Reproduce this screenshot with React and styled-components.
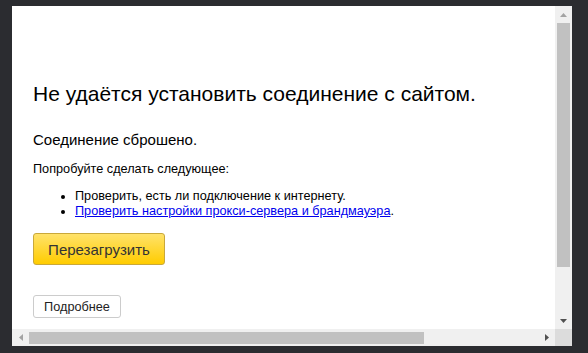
import React from "react";
import styled, { createGlobalStyle } from "styled-components";

const Global = createGlobalStyle`
  html, body { margin: 0; padding: 0; background: #2b2c30; }
  body { width: 588px; height: 353px; overflow: hidden; font-family: "Liberation Sans", Arial, sans-serif; }
`;

const Frame = styled.div`
  padding: 6px 16px 7px 12px;
  height: 353px;
  box-sizing: border-box;
`;

const Window = styled.div`
  width: 560px;
  height: 340px;
  background: #fff;
  display: grid;
  grid-template-columns: 1fr 17px;
  grid-template-rows: 1fr 17px;
`;

const Viewport = styled.div`
  overflow: hidden;
  padding: 76px 0 0 21px;
  color: #000;
`;

const Title = styled.h1`
  margin: 0;
  font-size: 21px;
  font-weight: normal;
  line-height: 24px;
`;

const Sub = styled.p`
  margin: 25px 0 0;
  font-size: 15px;
  line-height: 18px;
`;

const Hint = styled.p`
  margin: 13px 0 0;
  font-size: 12.7px;
  line-height: 15px;
`;

const List = styled.ul`
  margin: 12px 0 0;
  padding-left: 42px;
  font-size: 12.7px;
  line-height: 15px;
`;

const Link = styled.a`
  color: #0000ee;
  text-decoration: underline;
`;

const Reload = styled.button`
  display: block;
  margin-top: 14px;
  width: 132px;
  height: 32px;
  border: 1px solid #c9a83a;
  border-radius: 3px;
  background: linear-gradient(#ffe26a, #ffcc00);
  font-family: inherit;
  font-size: 15px;
  color: #333;
  padding: 0;
`;

const More = styled.button`
  display: block;
  margin-top: 30px;
  width: 88px;
  height: 23px;
  border: 1px solid #cccccc;
  border-radius: 3px;
  background: #fff;
  font-family: inherit;
  font-size: 12.7px;
  color: #222;
  padding: 0;
`;

const VBar = styled.div`
  background: #f0f0f0;
  display: grid;
  grid-template-rows: 17px 1fr 17px;
  justify-items: center;
  align-items: center;
`;

const VThumbTrack = styled.div`
  align-self: stretch;
  display: flex;
  flex-direction: column;
`;

const VThumb = styled.div`
  width: 13px;
  height: 244px;
  background: #c1c1c1;
`;

const HBar = styled.div`
  background: #f0f0f0;
  display: grid;
  grid-template-columns: 17px 1fr 17px;
  align-items: center;
  justify-items: center;
`;

const HThumbTrack = styled.div`
  justify-self: stretch;
  display: flex;
`;

const HThumb = styled.div`
  width: 395px;
  height: 12px;
  background: #c1c1c1;
`;

const Corner = styled.div`
  background: #dcdcdc;
`;

const Arrow = ({ dir, color }) => {
  const pts = {
    up: "0,4 3.5,0 7,4",
    down: "0,0 7,0 3.5,4",
    left: "4,0 4,7 0,3.5",
    right: "0,0 0,7 4,3.5",
  }[dir];
  const vertical = dir === "up" || dir === "down";
  return (
    <svg width={vertical ? 7 : 4} height={vertical ? 4 : 7} viewBox={vertical ? "0 0 7 4" : "0 0 4 7"}>
      <polygon points={pts} fill={color} />
    </svg>
  );
};

export default function App() {
  return (
    <Frame>
      <Global />
      <Window>
        <Viewport>
          <Title>Не удаётся установить соединение с сайтом.</Title>
          <Sub>Соединение сброшено.</Sub>
          <Hint>Попробуйте сделать следующее:</Hint>
          <List>
            <li>Проверить, есть ли подключение к интернету.</li>
            <li>
              <Link href="#">Проверить настройки прокси-сервера и брандмауэра</Link>.
            </li>
          </List>
          <Reload>Перезагрузить</Reload>
          <More>Подробнее</More>
        </Viewport>
        <VBar>
          <Arrow dir="up" color="#a3a3a3" />
          <VThumbTrack>
            <VThumb />
          </VThumbTrack>
          <Arrow dir="down" color="#505050" />
        </VBar>
        <HBar>
          <Arrow dir="left" color="#a3a3a3" />
          <HThumbTrack>
            <HThumb />
          </HThumbTrack>
          <Arrow dir="right" color="#505050" />
        </HBar>
        <Corner />
      </Window>
    </Frame>
  );
}
